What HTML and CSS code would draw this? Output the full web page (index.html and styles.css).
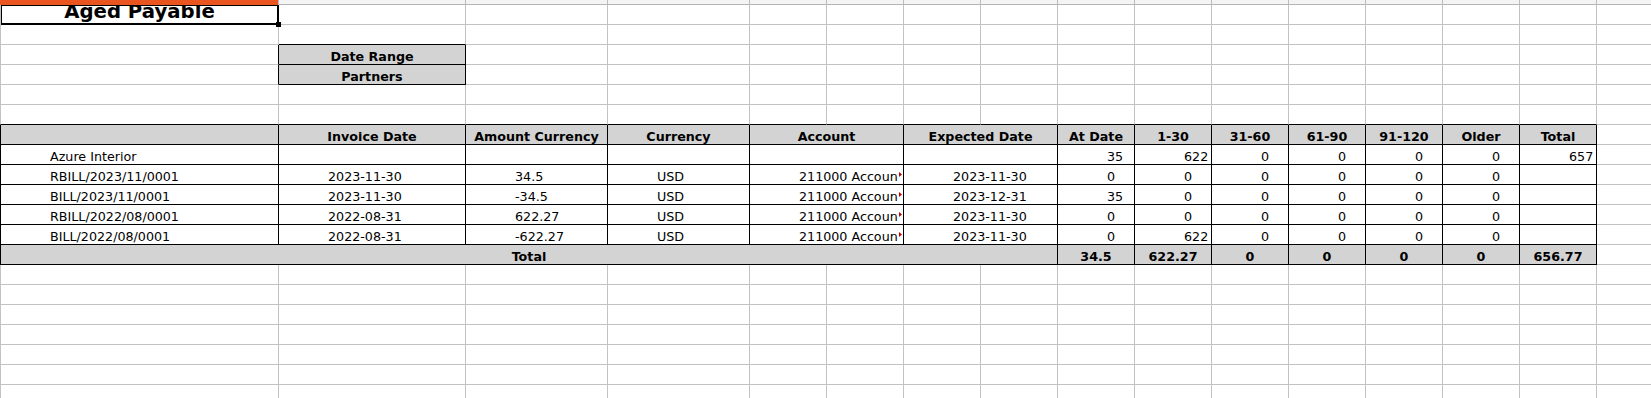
FILE: index.html
```html
<!DOCTYPE html>
<html>
<head>
<meta charset="utf-8">
<title>Aged Payable</title>
<link rel="stylesheet" href="styles.css">
</head>
<body>
<div class="sheet">
  <div class="colhead">
    <div class="ch sel"></div><div class="ch"></div><div class="ch"></div><div class="ch"></div><div class="ch"></div><div class="ch"></div><div class="ch"></div><div class="ch"></div><div class="ch"></div><div class="ch"></div><div class="ch"></div><div class="ch"></div><div class="ch"></div><div class="ch"></div><div class="ch"></div><div class="ch"></div>
  </div>

  <!-- row 1 -->
  <div class="row">
    <div class="c title"><span class="ttl">Aged Payable</span><span class="cursor"></span><span class="handle"></span></div>
    <div class="c"></div><div class="c"></div><div class="c"></div><div class="c"></div><div class="c"></div><div class="c"></div><div class="c"></div><div class="c"></div><div class="c"></div><div class="c"></div><div class="c"></div><div class="c"></div><div class="c"></div><div class="c"></div><div class="c"></div>
  </div>
  <!-- row 2 -->
  <div class="row">
    <div class="c"></div><div class="c bb"></div><div class="c"></div><div class="c"></div><div class="c"></div><div class="c"></div><div class="c"></div><div class="c"></div><div class="c"></div><div class="c"></div><div class="c"></div><div class="c"></div><div class="c"></div><div class="c"></div><div class="c"></div><div class="c"></div>
  </div>
  <!-- row 3 -->
  <div class="row">
    <div class="c br"></div><div class="c t g h">Date Range</div><div class="c"></div><div class="c"></div><div class="c"></div><div class="c"></div><div class="c"></div><div class="c"></div><div class="c"></div><div class="c"></div><div class="c"></div><div class="c"></div><div class="c"></div><div class="c"></div><div class="c"></div><div class="c"></div>
  </div>
  <!-- row 4 -->
  <div class="row">
    <div class="c br"></div><div class="c t g h">Partners</div><div class="c"></div><div class="c"></div><div class="c"></div><div class="c"></div><div class="c"></div><div class="c"></div><div class="c"></div><div class="c"></div><div class="c"></div><div class="c"></div><div class="c"></div><div class="c"></div><div class="c"></div><div class="c"></div>
  </div>
  <!-- row 5 -->
  <div class="row">
    <div class="c"></div><div class="c"></div><div class="c"></div><div class="c"></div><div class="c"></div><div class="c"></div><div class="c"></div><div class="c"></div><div class="c"></div><div class="c"></div><div class="c"></div><div class="c"></div><div class="c"></div><div class="c"></div><div class="c"></div><div class="c"></div>
  </div>
  <!-- row 6 -->
  <div class="row">
    <div class="c bb"></div><div class="c bb"></div><div class="c bb"></div><div class="c bb"></div><div class="c bb"></div><div class="c bb"></div><div class="c bb"></div><div class="c bb"></div><div class="c bb"></div><div class="c bb"></div><div class="c bb"></div><div class="c bb"></div><div class="c bb"></div><div class="c bb"></div><div class="c bb"></div><div class="c"></div>
  </div>
  <!-- row 7 header -->
  <div class="row tbl">
    <div class="c t g h"></div>
    <div class="c t g h">Invoice Date</div>
    <div class="c t g h">Amount Currency</div>
    <div class="c t g h">Currency</div>
    <div class="c t g h span2">Account</div>
    <div class="c t g h span2">Expected Date</div>
    <div class="c t g h">At Date</div>
    <div class="c t g h">1-30</div>
    <div class="c t g h">31-60</div>
    <div class="c t g h">61-90</div>
    <div class="c t g h">91-120</div>
    <div class="c t g h">Older</div>
    <div class="c t g h">Total</div>
    <div class="c"></div>
  </div>
  <!-- row 8 partner -->
  <div class="row tbl">
    <div class="c t">Azure Interior</div>
    <div class="c t"></div>
    <div class="c t"></div>
    <div class="c t"></div>
    <div class="c t span2"></div>
    <div class="c t span2"></div>
    <div class="c t">35</div>
    <div class="c t">622</div>
    <div class="c t">0</div>
    <div class="c t">0</div>
    <div class="c t">0</div>
    <div class="c t">0</div>
    <div class="c t">657</div>
    <div class="c"></div>
  </div>
  <!-- row 9 -->
  <div class="row tbl">
    <div class="c t">RBILL/2023/11/0001</div>
    <div class="c t">2023-11-30</div>
    <div class="c t">34.5</div>
    <div class="c t">USD</div>
    <div class="c t span2 acct"><span class="clip">211000 Account Payable</span><span class="more"></span></div>
    <div class="c t span2">2023-11-30</div>
    <div class="c t">0</div>
    <div class="c t">0</div>
    <div class="c t">0</div>
    <div class="c t">0</div>
    <div class="c t">0</div>
    <div class="c t">0</div>
    <div class="c t"></div>
    <div class="c"></div>
  </div>
  <!-- row 10 -->
  <div class="row tbl">
    <div class="c t">BILL/2023/11/0001</div>
    <div class="c t">2023-11-30</div>
    <div class="c t">-34.5</div>
    <div class="c t">USD</div>
    <div class="c t span2 acct"><span class="clip">211000 Account Payable</span><span class="more"></span></div>
    <div class="c t span2">2023-12-31</div>
    <div class="c t">35</div>
    <div class="c t">0</div>
    <div class="c t">0</div>
    <div class="c t">0</div>
    <div class="c t">0</div>
    <div class="c t">0</div>
    <div class="c t"></div>
    <div class="c"></div>
  </div>
  <!-- row 11 -->
  <div class="row tbl">
    <div class="c t">RBILL/2022/08/0001</div>
    <div class="c t">2022-08-31</div>
    <div class="c t">622.27</div>
    <div class="c t">USD</div>
    <div class="c t span2 acct"><span class="clip">211000 Account Payable</span><span class="more"></span></div>
    <div class="c t span2">2023-11-30</div>
    <div class="c t">0</div>
    <div class="c t">0</div>
    <div class="c t">0</div>
    <div class="c t">0</div>
    <div class="c t">0</div>
    <div class="c t">0</div>
    <div class="c t"></div>
    <div class="c"></div>
  </div>
  <!-- row 12 -->
  <div class="row tbl">
    <div class="c t">BILL/2022/08/0001</div>
    <div class="c t">2022-08-31</div>
    <div class="c t">-622.27</div>
    <div class="c t">USD</div>
    <div class="c t span2 acct"><span class="clip">211000 Account Payable</span><span class="more"></span></div>
    <div class="c t span2">2023-11-30</div>
    <div class="c t">0</div>
    <div class="c t">622</div>
    <div class="c t">0</div>
    <div class="c t">0</div>
    <div class="c t">0</div>
    <div class="c t">0</div>
    <div class="c t"></div>
    <div class="c"></div>
  </div>
  <!-- row 13 total -->
  <div class="row tbl">
    <div class="c t g h span8">Total</div>
    <div class="c t g h">34.5</div>
    <div class="c t g h">622.27</div>
    <div class="c t g h">0</div>
    <div class="c t g h">0</div>
    <div class="c t g h">0</div>
    <div class="c t g h">0</div>
    <div class="c t g h">656.77</div>
    <div class="c"></div>
  </div>
  <!-- rows 14-20 -->
  <div class="row">
    <div class="c"></div><div class="c"></div><div class="c"></div><div class="c"></div><div class="c"></div><div class="c"></div><div class="c"></div><div class="c"></div><div class="c"></div><div class="c"></div><div class="c"></div><div class="c"></div><div class="c"></div><div class="c"></div><div class="c"></div><div class="c"></div>
  </div>
  <div class="row">
    <div class="c"></div><div class="c"></div><div class="c"></div><div class="c"></div><div class="c"></div><div class="c"></div><div class="c"></div><div class="c"></div><div class="c"></div><div class="c"></div><div class="c"></div><div class="c"></div><div class="c"></div><div class="c"></div><div class="c"></div><div class="c"></div>
  </div>
  <div class="row">
    <div class="c"></div><div class="c"></div><div class="c"></div><div class="c"></div><div class="c"></div><div class="c"></div><div class="c"></div><div class="c"></div><div class="c"></div><div class="c"></div><div class="c"></div><div class="c"></div><div class="c"></div><div class="c"></div><div class="c"></div><div class="c"></div>
  </div>
  <div class="row">
    <div class="c"></div><div class="c"></div><div class="c"></div><div class="c"></div><div class="c"></div><div class="c"></div><div class="c"></div><div class="c"></div><div class="c"></div><div class="c"></div><div class="c"></div><div class="c"></div><div class="c"></div><div class="c"></div><div class="c"></div><div class="c"></div>
  </div>
  <div class="row">
    <div class="c"></div><div class="c"></div><div class="c"></div><div class="c"></div><div class="c"></div><div class="c"></div><div class="c"></div><div class="c"></div><div class="c"></div><div class="c"></div><div class="c"></div><div class="c"></div><div class="c"></div><div class="c"></div><div class="c"></div><div class="c"></div>
  </div>
  <div class="row">
    <div class="c"></div><div class="c"></div><div class="c"></div><div class="c"></div><div class="c"></div><div class="c"></div><div class="c"></div><div class="c"></div><div class="c"></div><div class="c"></div><div class="c"></div><div class="c"></div><div class="c"></div><div class="c"></div><div class="c"></div><div class="c"></div>
  </div>
  <div class="row">
    <div class="c"></div><div class="c"></div><div class="c"></div><div class="c"></div><div class="c"></div><div class="c"></div><div class="c"></div><div class="c"></div><div class="c"></div><div class="c"></div><div class="c"></div><div class="c"></div><div class="c"></div><div class="c"></div><div class="c"></div><div class="c"></div>
  </div>
</div>
</body>
</html>
```

FILE: styles.css
```css
html, body {
  margin: 0;
  padding: 0;
  background: #ffffff;
  overflow: hidden;
}

.sheet {
  width: 1674px;
  font-family: "DejaVu Sans", "Liberation Sans", sans-serif;
  font-size: 12.7px;
  color: #000;
}

.colhead,
.row {
  display: grid;
  grid-template-columns: 279px 187px 142px 142px repeat(12, 77px);
}

.colhead {
  height: 5px;
}

.ch {
  box-sizing: border-box;
  height: 5px;
  background: #f4f4f4;
  border-right: 1px solid #bdbdbd;
  border-bottom: 1px solid #b5b5b5;
}

.ch.sel {
  background: #e9541f;
  border-bottom: none;
}

.c {
  box-sizing: border-box;
  height: 20px;
  border-right: 1px solid #c3c3c3;
  border-bottom: 1px solid #c3c3c3;
  padding: 2px 0 0 49px;
  line-height: 19px;
  white-space: nowrap;
  overflow: hidden;
}

.row > .c:first-child {
  border-left: 1px solid #c3c3c3;
}

.row.tbl > .c:first-child {
  border-left-color: #000;
}

.t {
  border-right-color: #000;
  border-bottom-color: #000;
}

.bb {
  border-bottom-color: #000;
}

.br {
  border-right-color: #000;
}

.g {
  background: #d3d3d3;
}

.h {
  font-weight: bold;
  text-align: center;
  padding-left: 0;
}

.span2 {
  grid-column: span 2;
}

.span8 {
  grid-column: span 8;
}

/* title cell with the cell cursor */
.title {
  position: relative;
  padding: 0;
  overflow: visible;
}

.ttl {
  display: block;
  height: 19px;
  overflow: hidden;
  text-align: center;
  font-weight: bold;
  font-size: 19.7px;
  line-height: 13px;
}

.cursor {
  position: absolute;
  left: 0;
  top: 0;
  width: 278px;
  height: 20px;
  box-sizing: border-box;
  border-top: 1px solid #000;
  border-left: 1px solid #000;
  border-right: 2px solid #000;
  border-bottom: 2px solid #000;
}

.handle {
  position: absolute;
  left: 275px;
  top: 17px;
  width: 5px;
  height: 5px;
  background: #000;
}

/* clipped account text with overflow marker */
.acct {
  position: relative;
}

.clip {
  display: block;
  width: 99px;
  overflow: hidden;
  white-space: nowrap;
}

.more {
  position: absolute;
  left: 149px;
  top: 7px;
  width: 3px;
  height: 5px;
  background: #c00000;
  clip-path: polygon(0 0, 100% 50%, 0 100%);
}
```
